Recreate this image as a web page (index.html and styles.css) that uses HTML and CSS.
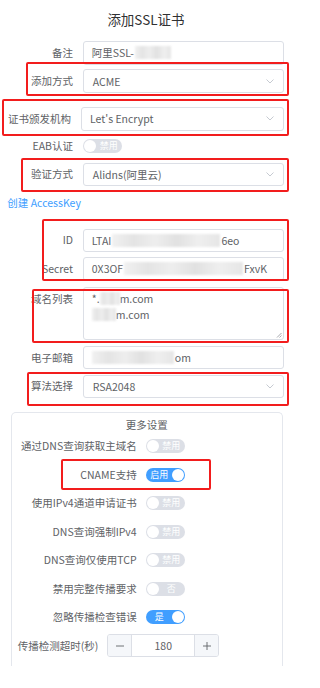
FILE: index.html
```html
<!DOCTYPE html>
<html lang="zh-CN">
<head>
<meta charset="utf-8">
<title>添加SSL证书</title>
<link rel="stylesheet" href="styles.css">
</head>
<body>
<div class="dialog">
  <h1 class="title">添加SSL证书</h1>

  <div class="row r-note">
    <span class="lbl">备注</span>
    <div class="field">阿里SSL-<span class="blur b-note"></span></div>
  </div>

  <div class="row r-method">
    <span class="lbl">添加方式</span>
    <div class="field select">ACME<svg class="arrow" viewBox="0 0 8 5"><path d="M0.5 0.5 L4 4 L7.5 0.5"/></svg></div>
    <span class="mark m-method"></span>
  </div>

  <div class="row r-ca">
    <span class="lbl">证书颁发机构</span>
    <div class="field select">Let's Encrypt<svg class="arrow" viewBox="0 0 8 5"><path d="M0.5 0.5 L4 4 L7.5 0.5"/></svg></div>
    <span class="mark m-ca"></span>
  </div>

  <div class="row r-eab">
    <span class="lbl">EAB认证</span>
    <span class="switch off"><span class="knob"></span><span class="sw-text">禁用</span></span>
  </div>

  <div class="row r-verify">
    <span class="lbl">验证方式</span>
    <div class="field select">Alidns(阿里云)<svg class="arrow" viewBox="0 0 8 5"><path d="M0.5 0.5 L4 4 L7.5 0.5"/></svg></div>
    <span class="mark m-verify"></span>
  </div>

  <div class="row r-link">
    <span class="link">创建 AccessKey</span>
  </div>

  <div class="group g-key">
    <div class="row r-id">
      <span class="lbl">ID</span>
      <div class="field">LTAI<span class="blur b-id"></span>6eo</div>
    </div>
    <div class="row r-secret">
      <span class="lbl">Secret</span>
      <div class="field">0X3OF<span class="blur b-secret"></span>FxvK</div>
    </div>
    <span class="mark m-key"></span>
  </div>

  <div class="row r-domain">
    <span class="lbl">域名列表</span>
    <div class="textarea">
      <div class="ta-line">*.<span class="blur b-d1"></span>m.com</div>
      <div class="ta-line"><span class="blur b-d2"></span>m.com</div>
      <svg class="grip" viewBox="0 0 6 6"><path d="M5.5 1 L1 5.5 M5.5 3.5 L3.5 5.5"/></svg>
    </div>
    <span class="mark m-domain"></span>
  </div>

  <div class="row r-email">
    <span class="lbl">电子邮箱</span>
    <div class="field"><span class="blur b-mail"></span>om</div>
  </div>

  <div class="row r-algo">
    <span class="lbl">算法选择</span>
    <div class="field select">RSA2048<svg class="arrow" viewBox="0 0 8 5"><path d="M0.5 0.5 L4 4 L7.5 0.5"/></svg></div>
    <span class="mark m-algo"></span>
  </div>

  <div class="panel">
    <div class="panel-head">更多设置</div>
    <div class="prow">
      <span class="plbl">通过DNS查询获取主域名</span>
      <span class="switch off"><span class="knob"></span><span class="sw-text">禁用</span></span>
    </div>
    <div class="prow">
      <span class="plbl">CNAME支持</span>
      <span class="switch on"><span class="sw-text">启用</span><span class="knob"></span></span>
      <span class="mark m-cname"></span>
    </div>
    <div class="prow">
      <span class="plbl">使用IPv4通道申请证书</span>
      <span class="switch off"><span class="knob"></span><span class="sw-text">禁用</span></span>
    </div>
    <div class="prow">
      <span class="plbl">DNS查询强制IPv4</span>
      <span class="switch off"><span class="knob"></span><span class="sw-text">禁用</span></span>
    </div>
    <div class="prow">
      <span class="plbl">DNS查询仅使用TCP</span>
      <span class="switch off"><span class="knob"></span><span class="sw-text">禁用</span></span>
    </div>
    <div class="prow">
      <span class="plbl">禁用完整传播要求</span>
      <span class="switch off"><span class="knob"></span><span class="sw-text">否</span></span>
    </div>
    <div class="prow">
      <span class="plbl">忽略传播检查错误</span>
      <span class="switch on"><span class="sw-text">是</span><span class="knob"></span></span>
    </div>
    <div class="prow prow-num">
      <span class="nlbl">传播检测超时(秒)</span>
      <div class="num">
        <span class="num-btn minus"><svg viewBox="0 0 8 8"><path d="M0 4 H8"/></svg></span>
        <span class="num-val">180</span>
        <span class="num-btn plus"><svg viewBox="0 0 8 8"><path d="M0 4 H8 M4 0 V8"/></svg></span>
      </div>
    </div>
  </div>
</div>
</body>
</html>
```

FILE: styles.css
```css
* { box-sizing: border-box; }
html, body { margin: 0; padding: 0; background: #fff; }
body {
  width: 301px;
  font-family: "Noto Sans CJK SC", "Noto Sans", sans-serif;
  font-size: 10.5px;
  color: #606266;
}
.dialog { width: 301px; }

.title {
  margin: 0;
  padding: 10px 9px 0 0;
  height: 28px;
  line-height: 18px;
  font-size: 13.5px;
  font-weight: 400;
  color: #303133;
  text-align: center;
}

.row { position: relative; display: flex; align-items: center; }
.lbl {
  flex: none;
  width: 73px;
  margin-right: 10.3px;
  text-align: right;
  white-space: nowrap;
  line-height: 14px;
}
.field {
  flex: none;
  align-self: stretch;
  width: 201px;
  display: flex;
  align-items: center;
  padding-left: 7.5px;
  border: 1px solid #dcdfe6;
  border-radius: 3px;
  background: #fff;
  white-space: nowrap;
  color: #606266;
}
.select { padding-left: 8.5px; }
.arrow {
  width: 8px;
  height: 5px;
  margin-left: auto;
  margin-right: 9.5px;
  fill: none;
  stroke: #c0c4cc;
  stroke-width: 0.9;
}

.blur {
  display: inline-block;
  height: 13px;
  background: linear-gradient(90deg, #f1f1f1 0%, #e4e4e4 20%, #eeeeee 40%, #e1e1e1 60%, #efefef 80%, #e6e6e6 100%);
  filter: blur(1.2px);
}
.b-note { width: 36px; margin-left: 1px; }
.b-id { width: 108px; margin: 0 1px; }
.b-secret { width: 119px; margin: 0 1px; }
.b-d1 { width: 20px; }
.b-d2 { width: 24px; }
.b-mail { width: 82px; margin-right: 1px; }

/* vertical rhythm */
.r-note { margin-top: 12.7px; height: 24px; }
.r-method { margin-top: 4.6px; height: 24px; }
.r-ca { margin-top: 13.4px; height: 24px; }
.r-ca .lbl { width: 71px; margin-right: 9.7px; }
.r-ca .field { width: 203.6px; }
.r-ca .select { padding-left: 8.3px; }
.r-eab { margin-top: 8px; height: 14px; }
.r-verify { margin-top: 10px; height: 23px; }
.r-link { margin-top: 10.5px; height: 14px; padding-left: 7.3px; }
.link { color: #409eff; line-height: 14px; }
.group { position: relative; margin-top: 18.8px; }
.r-id { height: 23px; }
.r-secret { margin-top: 5px; height: 23.7px; }
.r-domain { margin-top: 6.3px; height: 53.4px; align-items: flex-start; }
.r-domain .lbl { padding-top: 5px; }
.textarea {
  position: relative;
  flex: none;
  width: 201px;
  height: 100%;
  padding: 3px 0 0 7.5px;
  border: 1px solid #dcdfe6;
  border-radius: 3px;
}
.ta-line { height: 15.7px; line-height: 15.7px; white-space: nowrap; display: flex; align-items: center; }
.grip {
  position: absolute;
  right: 1px;
  bottom: 1px;
  width: 6px;
  height: 6px;
  fill: none;
  stroke: #909399;
  stroke-width: 0.8;
}
.r-email { margin-top: 5.6px; height: 23.3px; }
.r-algo { margin-top: 5.4px; height: 23px; }

/* red annotation frames */
.mark {
  position: absolute;
  border: 2px solid #f21d1d;
  border-radius: 2px;
  pointer-events: none;
}
.m-method { top: -7px; left: 26px; width: 263px; height: 34px; }
.m-ca { top: -8px; left: 2px; width: 287px; height: 37px; }
.m-verify { top: -4.5px; left: 21px; width: 268px; height: 33.4px; }
.m-key { top: -9.8px; left: 41.7px; width: 247px; height: 62.2px; }
.m-domain { top: 1.7px; left: 31.7px; width: 257px; height: 54.8px; }
.m-algo { top: -2.7px; left: 26.7px; width: 262px; height: 34px; }
.m-cname { top: -1.3px; left: 49px; width: 149.7px; height: 30.7px; }

/* switches */
.switch {
  flex: none;
  display: inline-flex;
  align-items: center;
  width: 39px;
  height: 14px;
  padding: 0 1px;
  border-radius: 7px;
  background: #dcdfe6;
}
.switch.on { background: #409eff; }
.knob {
  flex: none;
  width: 12px;
  height: 12px;
  border-radius: 50%;
  background: #fff;
}
.sw-text {
  flex: 1;
  text-align: center;
  font-size: 9px;
  line-height: 14px;
  color: #fff;
  white-space: nowrap;
}

/* more settings panel */
.panel {
  margin: 14.3px 18.3px 0 11px;
  padding: 5px 0 6px;
  border: 1px solid #e4e7ed;
  border-bottom: none;
  border-radius: 5px 5px 0 0;
}
.panel-head {
  height: 14px;
  line-height: 14px;
  text-align: center;
  color: #606266;
}
.prow {
  position: relative;
  display: flex;
  align-items: center;
  height: 28.5px;
}
.plbl {
  flex: none;
  width: 124.7px;
  margin-right: 9px;
  text-align: right;
  white-space: nowrap;
  line-height: 14px;
}
.prow-num { padding-left: 5.3px; }
.nlbl {
  flex: none;
  width: 81px;
  margin-right: 9px;
  text-align: right;
  white-space: nowrap;
  line-height: 14px;
}
.num {
  flex: none;
  display: flex;
  width: 112px;
  height: 23px;
  border: 1px solid #dcdfe6;
  border-radius: 3px;
  background: #fff;
  overflow: hidden;
}
.num-btn {
  flex: none;
  width: 24px;
  display: flex;
  align-items: center;
  justify-content: center;
  background: #f5f7fa;
}
.num-btn.minus { border-right: 1px solid #dcdfe6; }
.num-btn.plus { border-left: 1px solid #dcdfe6; }
.num-btn svg {
  width: 8px;
  height: 8px;
  fill: none;
  stroke: #606266;
  stroke-width: 0.9;
}
.num-val {
  flex: 1;
  display: flex;
  align-items: center;
  justify-content: center;
  color: #606266;
}
```
